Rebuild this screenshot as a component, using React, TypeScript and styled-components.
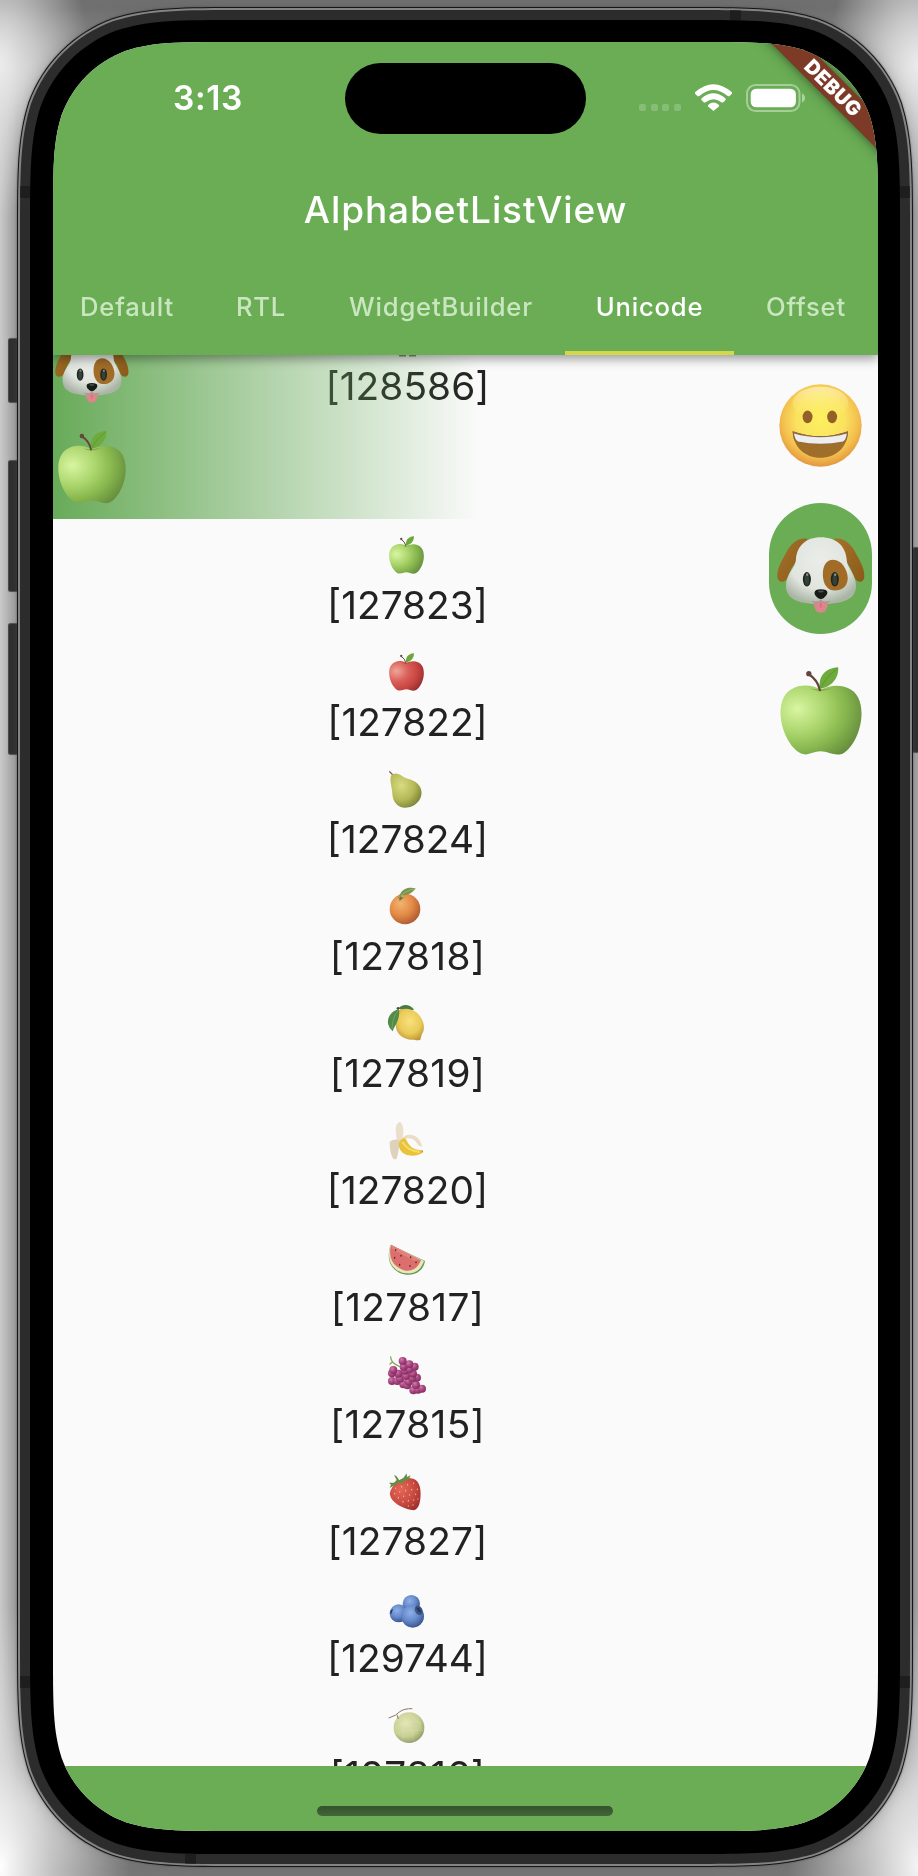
import React from "react";
import styled, { createGlobalStyle } from "styled-components";

const GREEN = "#6aad55";
const SURFACE = "#fafafa";

const GlobalStyle = createGlobalStyle`
  *, *::before, *::after { box-sizing: border-box; }
  html, body { margin: 0; padding: 0; }
  body { width: 918px; height: 1876px; overflow: hidden; font-family: Inter, "Liberation Sans", sans-serif; }
  svg { display: block; }
`;

/* Continuous-curvature rounded rectangle, as used by the device's corners. */
const squircle = (w: number, h: number, r: number) => {
  const p = (n: number) => (n * r).toFixed(2);
  const x = (n: number) => (w - n * r).toFixed(2);
  const y = (n: number) => (h - n * r).toFixed(2);
  return (
    `M${p(1.5287)} 0L${x(1.5287)} 0` +
    `C${x(1.0885)} 0 ${x(0.8684)} 0 ${x(0.6315)} ${p(0.0749)}` +
    `C${x(0.3728)} ${p(0.1691)} ${x(0.1691)} ${p(0.3728)} ${x(0.0749)} ${p(0.6315)}` +
    `C${w} ${p(0.8684)} ${w} ${p(1.0885)} ${w} ${p(1.5287)}` +
    `L${w} ${y(1.5287)}` +
    `C${w} ${y(1.0885)} ${w} ${y(0.8684)} ${x(0.0749)} ${y(0.6315)}` +
    `C${x(0.1691)} ${y(0.3728)} ${x(0.3728)} ${y(0.1691)} ${x(0.6315)} ${y(0.0749)}` +
    `C${x(0.8684)} ${h} ${x(1.0885)} ${h} ${x(1.5287)} ${h}` +
    `L${p(1.5287)} ${h}` +
    `C${p(1.0885)} ${h} ${p(0.8684)} ${h} ${p(0.6315)} ${y(0.0749)}` +
    `C${p(0.3728)} ${y(0.1691)} ${p(0.1691)} ${y(0.3728)} ${p(0.0749)} ${y(0.6315)}` +
    `C0 ${y(0.8684)} 0 ${y(1.0885)} 0 ${y(1.5287)}` +
    `L0 ${p(1.5287)}` +
    `C0 ${p(1.0885)} 0 ${p(0.8684)} ${p(0.0749)} ${p(0.6315)}` +
    `C${p(0.1691)} ${p(0.3728)} ${p(0.3728)} ${p(0.1691)} ${p(0.6315)} ${p(0.0749)}` +
    `C${p(0.8684)} 0 ${p(1.0885)} 0 ${p(1.5287)} 0Z`
  );
};

const Backdrop = styled.main`
  position: relative;
  width: 918px;
  height: 1876px;
  padding: 7px 5px 9px 17px;
  overflow: hidden;
  background:
    radial-gradient(ellipse 90px 150px at 0 65px, #ebebeb, rgba(225, 225, 225, 0.75) 35%, rgba(190, 190, 190, 0)),
    radial-gradient(ellipse 90px 150px at 918px 65px, #ebebeb, rgba(225, 225, 225, 0.75) 35%, rgba(190, 190, 190, 0)),
    radial-gradient(ellipse 130px 260px at 0 1866px, #fff, rgba(225, 225, 225, 0.7) 40%, rgba(190, 190, 190, 0)),
    radial-gradient(ellipse 130px 260px at 918px 1866px, #f4f4f4, rgba(220, 220, 220, 0.7) 40%, rgba(190, 190, 190, 0)),
    linear-gradient(#707070 0 8px, rgba(112, 112, 112, 0) 70px calc(100% - 70px), #777 calc(100% - 8px)),
    linear-gradient(to right, #cacaca, #a2a2a2 17px calc(100% - 7px), #aaa);
`;

const SideButton = styled.div<{ $side: "left" | "right"; $top: number; $height: number }>`
  position: absolute;
  ${({ $side }) => ($side === "left" ? "left: 8px;" : "right: -5px;")}
  top: ${({ $top }) => $top}px;
  width: 11px;
  height: ${({ $height }) => $height}px;
  border: 1px solid #555;
  border-left-color: #4b4b4b;
  border-radius: 3px;
  background: #2c2c2c;
  box-shadow: 0 0 1px rgba(80, 80, 80, 0.6);
`;

const Shell = styled.div`
  position: relative;
  width: 896px;
  height: 1860px;
  filter: drop-shadow(0 0 1px rgba(60, 60, 60, 0.6)) drop-shadow(0 0 8px rgba(90, 90, 90, 0.35));
`;

const Outline = styled.div`
  width: 896px;
  height: 1860px;
  padding: 1px;
  background: #151515;
  clip-path: path("${squircle(896, 1860, 151)}");
`;

const Rim = styled.div`
  height: 1858px;
  padding: 2px;
  background: #848484;
  clip-path: path("${squircle(894, 1858, 150)}");
`;

const Band = styled.div`
  position: relative;
  height: 1854px;
  padding: 10px;
  background: #2c2c2c;
  clip-path: path("${squircle(890, 1854, 148)}");
`;

const AntennaLine = styled.i<{ $x: number; $y: number; $vertical?: boolean }>`
  position: absolute;
  left: ${({ $x }) => $x}px;
  top: ${({ $y }) => $y}px;
  width: ${({ $vertical }) => ($vertical ? 11 : 10)}px;
  height: ${({ $vertical }) => ($vertical ? 10 : 12)}px;
  background: #1e1e1e;
`;

const Bezel = styled.div`
  position: relative;
  height: 1834px;
  padding: 22px 22px 23px 23px;
  background: #000;
  clip-path: path("${squircle(870, 1834, 138)}");
`;

const Screen = styled.div`
  position: relative;
  display: flex;
  flex-direction: column;
  width: 825px;
  height: 1789px;
  background: ${SURFACE};
  clip-path: path("${squircle(825, 1789, 115.5)}");
`;

const AppBar = styled.header`
  position: relative;
  z-index: 2;
  flex: 0 0 313px;
  background: ${GREEN};
  color: #fff;
  box-shadow: 0 4px 10px rgba(0, 0, 0, 0.38);
`;

const StatusBar = styled.div`
  display: grid;
  grid-template-columns: 292px 241px 292px;
  align-items: center;
  height: 113px;
`;

const Clock = styled.time`
  margin-top: -2px;
  padding-left: 18px;
  text-align: center;
  font-size: 33.5px;
  font-weight: 600;
  line-height: 40px;
  letter-spacing: 0.6px;
`;

const Island = styled.div`
  height: 71px;
  border-radius: 36px;
  background: #000;
`;

const StatusIcons = styled.div`
  display: flex;
  align-items: center;
  gap: 14px;
  margin: -2px 0 0 53px;
`;

const SignalDots = styled.div`
  display: flex;
  gap: 4.5px;
  width: 42px;
  padding-top: 19px;
  i {
    flex: 1;
    height: 7px;
    border-radius: 2px;
    background: rgba(255, 255, 255, 0.2);
  }
`;

const Title = styled.h1`
  height: 109px;
  margin: 0;
  text-align: center;
  font-size: 37px;
  font-weight: 500;
  line-height: 109px;
  letter-spacing: 0.92px;
`;

const Tabs = styled.nav`
  display: flex;
  height: 91px;
  margin-left: -4px;
`;

const Tab = styled.a<{ $width: number; $active?: boolean }>`
  flex: 0 0 ${({ $width }) => $width}px;
  padding-top: 3px;
  text-align: center;
  font-size: 25.6px;
  font-weight: 500;
  line-height: 80px;
  letter-spacing: 0.8px;
  white-space: nowrap;
  color: ${({ $active }) => ($active ? "#fff" : "#c9e6c0")};
  border-bottom: 4px solid ${({ $active }) => ($active ? "#d2d847" : "transparent")};
`;

const Ribbon = styled.div`
  position: absolute;
  z-index: 4;
  top: 33px;
  left: 679px;
  width: 200px;
  height: 24px;
  padding-left: 3px;
  background: #7c3a27;
  box-shadow: 0 0 12px rgba(0, 0, 0, 0.5);
  color: #fff;
  text-align: center;
  font-size: 20px;
  font-weight: 900;
  line-height: 25px;
  letter-spacing: 0.35px;
  transform: rotate(45deg);
`;

const Body = styled.section`
  display: flex;
  flex: 1;
  height: 1411px;
  overflow: hidden;
`;

const ListColumn = styled.div`
  flex: 0 0 709px;
  height: 1411px;
  overflow: hidden;
`;

const StickyHeader = styled.div`
  display: grid;
  height: 164px;
  overflow: hidden;
  > * { grid-area: 1 / 1; }
`;

const HeaderFade = styled.div`
  width: 426px;
  height: 164px;
  background: linear-gradient(to right, #68ab59, transparent);
`;

const HeaderIcons = styled.div`
  display: flex;
  flex-direction: column;
  gap: 27px;
  margin-top: -16px;
  padding-left: 2px;
  svg:last-child { margin-left: 3px; }
`;

const Code = styled.div<{ $spacing?: number }>`
  text-align: center;
  color: #222;
  font-size: 38.8px;
  line-height: 48px;
  letter-spacing: ${({ $spacing = 0 }) => $spacing}px;
`;

const PartlyHidden = styled.div`
  display: flex;
  flex-direction: column;
  align-items: center;
  gap: 5px;
`;

const List = styled.ul`
  margin: 0;
  padding: 11px 0 0;
  list-style: none;
`;

const Row = styled.li`
  display: flex;
  flex-direction: column;
  gap: 7px;
  height: 117px;
  padding-top: 6px;
  > svg { align-self: center; margin-right: 1.5px; overflow: visible; }
`;

const Sidebar = styled.aside`
  display: flex;
  flex-direction: column;
  align-items: center;
  flex: 1;
  padding: 29px 0 0 1px;
`;

const Pill = styled.div`
  display: flex;
  justify-content: center;
  width: 103px;
  height: 131px;
  margin: 36px 0 33px;
  padding-top: 34px;
  border-radius: 52px;
  background: ${GREEN};
`;

const Footer = styled.footer`
  display: flex;
  flex: 0 0 65px;
  justify-content: center;
  padding: 40px 1px 0 0;
  background: ${GREEN};
`;

const HomeIndicator = styled.div`
  width: 296px;
  height: 10px;
  border-radius: 5px;
  background: linear-gradient(#35502d, #426739);
`;

const Wifi = () => (
  <svg width="37" height="27" viewBox="0 0 111 81" fill="#fff">
    <path d="M1 24Q55-23 110 24Q113 27 109 31L104 36Q101 38 97 35Q55 1 14 35Q10 38 7 36L2 31Q-2 27 1 24Z" />
    <path d="M20 43Q55 13 91 43Q94 46 91 49L85 55Q82 57 78 54Q55 37 33 54Q29 57 26 55L20 49Q17 46 20 43Z" />
    <path d="M40 62Q55 49 71 62Q74 65 71 68L58 79Q55 82 53 79L40 68Q37 65 40 62Z" />
  </svg>
);

const Battery = () => (
  <svg width="60" height="28" viewBox="0 0 60 28">
    <rect x="1" y="1" width="52.5" height="26" rx="8.5" fill="none" stroke="#fff" strokeOpacity=".4" strokeWidth="2" />
    <rect x="4.7" y="4.7" width="45.2" height="18.6" rx="5.5" fill="#fff" />
    <path d="M56 9.5Q59 10.8 59 14Q59 17.2 56 18.5Z" fill="#fff" fillOpacity=".45" />
  </svg>
);

const Smiley = () => (
  <svg width="83" height="83" viewBox="0 0 250 250" role="img" aria-label="grinning face">
    <defs>
      <radialGradient id="face" cx=".5" cy=".42" r=".6">
        <stop offset="0" stopColor="#fdf060" />
        <stop offset=".5" stopColor="#fae25f" />
        <stop offset=".78" stopColor="#f3bd4d" />
        <stop offset="1" stopColor="#df903d" />
      </radialGradient>
      <linearGradient id="faceShine" x2="0" y2="1">
        <stop offset="0" stopColor="#fffbd9" />
        <stop offset="1" stopColor="#fff45f" stopOpacity="0" />
      </linearGradient>
    </defs>
    <circle cx="125" cy="125" r="124" fill="url(#face)" />
    <ellipse cx="125" cy="58" rx="84" ry="50" fill="url(#faceShine)" opacity=".6" />
    <ellipse cx="86" cy="99" rx="15" ry="19" fill="#93602a" />
    <ellipse cx="160" cy="99" rx="15" ry="19" fill="#93602a" />
    <path d="M41 142Q125 172 208 142C206 192 170 222 125 222C79 222 43 190 41 142Z" fill="#a06e2b" />
    <path d="M41 142Q125 172 208 142L206 158Q205 171 196 175Q125 189 55 175Q45 173 43 158Z" fill="#8f673d" />
    <path d="M45 149Q125 172 204 149Q202 168 193 173Q125 187 57 173Q48 168 45 149Z" fill="#edeef2" />
  </svg>
);

const Dog = ({ width, height }: { width: number; height: number }) => (
  <svg width={width} height={height} viewBox="0 0 265 228" role="img" aria-label="dog">
    <defs>
      <radialGradient id="fur" cx=".48" cy=".34" r=".66">
        <stop offset="0" stopColor="#eaede9" />
        <stop offset=".65" stopColor="#e1e5de" />
        <stop offset="1" stopColor="#aab5a5" />
      </radialGradient>
      <linearGradient id="ear" x2="1" y2="1">
        <stop offset="0" stopColor="#a5722b" />
        <stop offset="1" stopColor="#8a5a18" />
      </linearGradient>
    </defs>
    <path d="M91 5C66 0 42 16 26 50C10 78 0 98 1 120Q3 136 18 134Q31 132 36 112Q48 70 88 55Z" fill="url(#ear)" />
    <path d="M172 5C197 0 223 18 238 50C255 80 264 99 263 120Q261 136 247 134Q234 131 229 112Q217 70 178 55Z" fill="url(#ear)" />
    <path d="M132 0C87 0 59 27 57 68C56 91 27 111 27 146C27 186 61 200 132 202C203 200 238 186 238 146C238 112 210 92 210 68C207 26 178 0 132 0Z" fill="url(#fur)" />
    <path d="M169 68C194 68 213 98 213 124C213 148 195 161 175 161C151 161 138 141 138 111C138 86 149 68 169 68Z" fill="#a16c28" />
    <ellipse cx="90" cy="127" rx="12" ry="22" fill="#1d251f" />
    <ellipse cx="90" cy="129" rx="7" ry="16" fill="#354039" />
    <circle cx="91" cy="113" r="4" fill="#818b83" />
    <ellipse cx="174" cy="127" rx="12" ry="22" fill="#1d251f" />
    <ellipse cx="174" cy="129" rx="7" ry="16" fill="#354039" />
    <circle cx="175" cy="113" r="4" fill="#818b83" />
    <path d="M110 192Q111 228 132 228Q153 228 154 192Q142 197 132 189Q121 197 110 192Z" fill="#dd858c" />
    <path d="M132 198V213" stroke="#c46972" strokeWidth="3" />
    <path d="M105 193Q126 203 132 188Q139 203 160 193" fill="none" stroke="#9aa195" strokeWidth="3" />
    <path d="M113 167Q114 157 132 157Q151 157 152 167Q152 175 141 183Q132 190 123 183Q112 175 113 167Z" fill="#171c18" />
    <ellipse cx="132" cy="164" rx="9" ry="3" fill="#47504a" />
  </svg>
);

const Apple = ({ width, height, tone }: { width: number; height: number; tone: "green" | "red" }) => {
  const stops = tone === "green" ? ["#d9f5a1", "#aad56c", "#86b64d", "#68903f"] : ["#f0a59a", "#d95f58", "#c94643", "#9b3031"];
  return (
    <svg width={width} height={height} viewBox="0 0 245 264" role="img" aria-label={`${tone} apple`}>
      <defs>
        <radialGradient id={`apple-${tone}`} cx=".21" cy=".34" r=".83">
          {stops.map((c, i) => <stop key={c} offset={[0, 0.42, 0.72, 1][i]} stopColor={c} />)}
        </radialGradient>
      </defs>
      <path d="M121 67C98 56 70 50 41 63C12 75 0 105 1 142C3 191 30 243 61 259C83 269 98 253 121 253C145 253 163 269 187 260C217 245 243 192 244 143C245 104 232 75 203 63C173 50 145 58 121 67Z" fill={`url(#apple-${tone})`} />
      <path d="M89 64Q121 82 156 63Q120 72 89 64Z" fill={tone === "green" ? "#638c38" : "#8d302d"} opacity=".5" />
      <path d="M119 69Q113 39 85 21" fill="none" stroke="#65443e" strokeWidth="7" strokeLinecap="round" />
      <circle cx="86" cy="20" r="8" fill="#65443e" />
      <path d="M120 65C113 34 130 4 174 1C177 32 154 61 120 65Z" fill="#6faa3c" />
      <path d="M121 64Q139 28 171 5" stroke="#5b9636" strokeWidth="3" fill="none" />
    </svg>
  );
};

const MonkeyFeet = () => (
  <svg width="20" height="2" viewBox="0 0 20 2" role="img" aria-label="monkey">
    <path d="M1 0H8V1.5H1ZM11 0H18V1.5H11Z" fill="#8d8078" />
  </svg>
);

const Fruit = ({ label, children }: { label: string; children: React.ReactNode }) => (
  <svg width="38" height="38" viewBox="0 0 114 114" role="img" aria-label={label}>{children}</svg>
);

const Pear = () => (
  <Fruit label="pear">
    <defs><radialGradient id="pear" cx=".35" cy=".35" r=".7"><stop stopColor="#d8dc83" /><stop offset=".6" stopColor="#b5b956" /><stop offset="1" stopColor="#7f873b" /></radialGradient></defs>
    <path d="M5 5L18 18" stroke="#8a6350" strokeWidth="4" strokeLinecap="round" />
    <path d="M9 17C17 8 31 8 42 18C53 28 80 27 94 47C112 74 91 106 62 112C35 119 14 98 13 71C12 49 4 35 9 17Z" fill="url(#pear)" />
  </Fruit>
);

const Orange = () => (
  <Fruit label="tangerine">
    <defs><radialGradient id="orange" cx=".36" cy=".32" r=".72"><stop stopColor="#f3b36f" /><stop offset=".55" stopColor="#e28a45" /><stop offset="1" stopColor="#ad5a32" /></radialGradient></defs>
    <circle cx="51" cy="66" r="46" fill="url(#orange)" />
    <path d="M26 26L36 33L35 20L42 32L51 31L41 36L35 43L34 35Z" fill="#587d3c" />
    <path d="M34 31C38 4 62-1 83 4C72 20 56 26 41 25Z" fill="#78964f" />
    <path d="M35 30Q52 11 80 5" stroke="#a6bb78" strokeWidth="2" fill="none" />
  </Fruit>
);

const Lemon = () => (
  <Fruit label="lemon">
    <defs><radialGradient id="lemon" cx=".5" cy=".4" r=".65"><stop stopColor="#f8e07c" /><stop offset=".6" stopColor="#e9cb58" /><stop offset="1" stopColor="#bf9437" /></radialGradient></defs>
    <path d="M31 14C42-3 68 0 78 17L60 21Z" fill="#487c43" />
    <path d="M34 18C62 8 87 20 99 41C110 60 111 77 101 92L97 107Q89 110 79 107C47 110 24 91 23 64C22 47 25 28 34 18Z" fill="url(#lemon)" />
    <path d="M33 15C10 20-5 42 1 62Q4 74 14 82C20 63 37 48 33 15Z" fill="#518b48" />
    <path d="M31 18Q13 38 12 75" stroke="#83ab69" strokeWidth="2" fill="none" />
    <circle cx="30" cy="13" r="4" fill="#445a32" />
  </Fruit>
);

const Banana = () => (
  <Fruit label="banana">
    <path d="M34 3Q22 8 23 31L27 61L42 59Q49 32 44 15Q41 4 34 3Z" fill="#eadfca" />
    <path d="M5 62Q19 52 34 57Q35 83 26 113Q18 118 14 110Q5 94 5 62Z" fill="#ded2bb" />
    <path d="M37 57Q55 33 81 45Q100 56 102 77Q96 77 90 71Q76 49 58 52Q49 54 43 64Z" fill="#e9dec5" />
    <path d="M34 61C45 52 51 48 55 57C65 79 77 86 103 88L104 95C82 110 48 106 37 87Q30 75 34 61Z" fill="#e9c23c" />
    <path d="M43 63Q57 88 94 93" fill="none" stroke="#f5dc69" strokeWidth="6" />
    <path d="M101 88L105 90L103 95" fill="#8a723f" />
  </Fruit>
);

const Watermelon = () => (
  <Fruit label="watermelon">
    <path d="M8 20C-10 73 17 105 55 110C83 113 107 97 111 69Z" fill="#679755" />
    <path d="M8 20C-8 71 17 101 54 106C80 108 99 97 108 69Z" fill="#e8e6bb" />
    <path d="M9 20C-2 67 23 90 53 98C73 100 89 92 99 67Z" fill="#dc6e6d" />
    <path d="M9 20L99 67L79 68L14 34Z" fill="#ed9188" opacity=".55" />
    {[[23,36],[20,59],[39,53],[68,58],[84,73],[35,80],[66,84]].map(([x,y]) => <ellipse key={`${x}-${y}`} cx={x} cy={y} rx="2" ry="3" fill="#392825" />)}
  </Fruit>
);

const Grapes = () => (
  <Fruit label="grapes">
    <defs><radialGradient id="grape" cx=".36" cy=".32" r=".75"><stop stopColor="#d07fac" /><stop offset=".45" stopColor="#ad4884" /><stop offset="1" stopColor="#7a2a59" /></radialGradient></defs>
    <path d="M8 6Q9 25 34 34M14 20L6 27" stroke="#89a65d" strokeWidth="4" fill="none" strokeLinecap="round" />
    {[[12,80],[28,80],[46,90],[58,93],[76,108],[90,106],[102,103],[84,92],[62,82],[36,73],[87,70],[73,72],[54,65],[31,58],[75,58],[12,57],[16,47],[50,49],[65,45],[80,37],[47,37],[64,30],[44,20]].map(([x,y]) => <circle key={`${x}-${y}`} cx={x} cy={y-2} r="12" fill="url(#grape)" />)}
  </Fruit>
);

const Strawberry = () => (
  <Fruit label="strawberry">
    <defs><radialGradient id="berry" cx=".35" cy=".35" r=".75"><stop stopColor="#e46659" /><stop offset=".6" stopColor="#ca4a41" /><stop offset="1" stopColor="#9d302e" /></radialGradient></defs>
    <path d="M20 37C36 18 58 15 78 21C96 29 100 54 97 81C94 106 85 117 71 114C43 110 10 91 6 69Q4 55 20 37Z" fill="url(#berry)" />
    <path d="M30 34L5 48L9 38L3 32L18 32L26 24L18 9L25 12L34 25L46 18L56 4L57 15L68 10L61 24L48 27L44 36L34 31Z" fill="#658e44" />
    {[[23,49],[41,44],[59,38],[77,34],[20,65],[35,60],[53,56],[71,53],[88,52],[31,77],[47,73],[65,69],[83,67],[45,89],[61,86],[77,84],[90,81],[61,102],[75,99]].map(([x,y]) => <ellipse key={`${x}-${y}`} cx={x} cy={y} rx="1.8" ry="2.5" fill="#f0bd86" />)}
  </Fruit>
);

const Blueberries = () => (
  <Fruit label="blueberries">
    <defs><radialGradient id="blue" cx=".4" cy=".34" r=".68"><stop stopColor="#8fb0e6" /><stop offset=".55" stopColor="#6488ca" /><stop offset="1" stopColor="#3a548c" /></radialGradient></defs>
    <circle cx="70" cy="44" r="26" fill="url(#blue)" />
    <circle cx="32" cy="73" r="27" fill="url(#blue)" />
    <circle cx="74" cy="82" r="34" fill="url(#blue)" />
    <ellipse cx="92" cy="64" rx="11" ry="15" transform="rotate(-28 92 64)" fill="#3d5585" />
    <path d="M84 55L93 57L101 71L92 68Z" fill="#22355c" />
    <path d="M7 66L15 59L11 72L7 77Z" fill="#233662" />
  </Fruit>
);

const Melon = () => (
  <Fruit label="melon">
    <defs><radialGradient id="melon" cx=".4" cy=".35" r=".68"><stop stopColor="#e1e6b4" /><stop offset=".65" stopColor="#c8cf94" /><stop offset="1" stopColor="#929d68" /></radialGradient></defs>
    <circle cx="63" cy="65" r="46" fill="url(#melon)" />
    <path d="M2 36Q27 28 34 18Q48 7 73 8M27 26L31 39" stroke="#8e7761" strokeWidth="3" fill="none" />
    <path d="M30 38Q47 55 45 98M40 29Q72 47 76 104M58 22Q91 38 102 74M19 68Q54 41 100 49M22 85Q56 68 107 74" stroke="#e5e9c5" strokeWidth="1.2" opacity=".5" fill="none" />
  </Fruit>
);

const items = [
  { code: "127823", icon: <Apple width={35} height={38} tone="green" /> },
  { code: "127822", icon: <Apple width={35} height={38} tone="red" /> },
  { code: "127824", icon: <Pear /> },
  { code: "127818", icon: <Orange />, spacing: 0.32 },
  { code: "127819", icon: <Lemon />, spacing: 0.32 },
  { code: "127820", icon: <Banana /> },
  { code: "127817", icon: <Watermelon />, spacing: 0.32 },
  { code: "127815", icon: <Grapes />, spacing: 0.32 },
  { code: "127827", icon: <Strawberry />, spacing: 0.15 },
  { code: "129744", icon: <Blueberries /> },
  { code: "127816", icon: <Melon />, spacing: 0.32 },
];

const tabs = [
  { label: "Default", width: 156 },
  { label: "RTL", width: 112 },
  { label: "WidgetBuilder", width: 248 },
  { label: "Unicode", width: 169, active: true },
  { label: "Offset", width: 144 },
];

export default function App() {
  return (
    <>
      <GlobalStyle />
      <Backdrop>
        <SideButton $side="left" $top={338} $height={65} />
        <SideButton $side="left" $top={460} $height={132} />
        <SideButton $side="left" $top={623} $height={132} />
        <SideButton $side="right" $top={547} $height={206} />
        <Shell>
          <Outline>
            <Rim>
              <Band>
                <AntennaLine $x={0} $y={176} />
                <AntennaLine $x={880} $y={176} />
                <AntennaLine $x={0} $y={1666} />
                <AntennaLine $x={880} $y={1666} />
                <AntennaLine $x={710} $y={0} $vertical />
                <AntennaLine $x={165} $y={1844} $vertical />
                <Bezel>
                  <Screen>
                    <AppBar>
                      <StatusBar>
                        <Clock>3:13</Clock>
                        <Island />
                        <StatusIcons>
                          <SignalDots><i /><i /><i /><i /></SignalDots>
                          <Wifi />
                          <Battery />
                        </StatusIcons>
                      </StatusBar>
                      <Title>AlphabetListView</Title>
                      <Tabs>
                        {tabs.map((t) => (
                          <Tab key={t.label} $width={t.width} $active={t.active}>{t.label}</Tab>
                        ))}
                      </Tabs>
                    </AppBar>
                    <Body>
                      <ListColumn>
                        <StickyHeader>
                          <PartlyHidden>
                            <MonkeyFeet />
                            <Code $spacing={0.1}>[128586]</Code>
                          </PartlyHidden>
                          <HeaderFade />
                          <HeaderIcons>
                            <Dog width={74} height={64} />
                            <Apple width={68} height={74} tone="green" />
                          </HeaderIcons>
                        </StickyHeader>
                        <List>
                          {items.map((item) => (
                            <Row key={item.code}>
                              {item.icon}
                              <Code $spacing={item.spacing}>[{item.code}]</Code>
                            </Row>
                          ))}
                        </List>
                      </ListColumn>
                      <Sidebar>
                        <Smiley />
                        <Pill><Dog width={88} height={76} /></Pill>
                        <Apple width={82} height={88} tone="green" />
                      </Sidebar>
                    </Body>
                    <Footer><HomeIndicator /></Footer>
                    <Ribbon>DEBUG</Ribbon>
                  </Screen>
                </Bezel>
              </Band>
            </Rim>
          </Outline>
        </Shell>
      </Backdrop>
    </>
  );
}
